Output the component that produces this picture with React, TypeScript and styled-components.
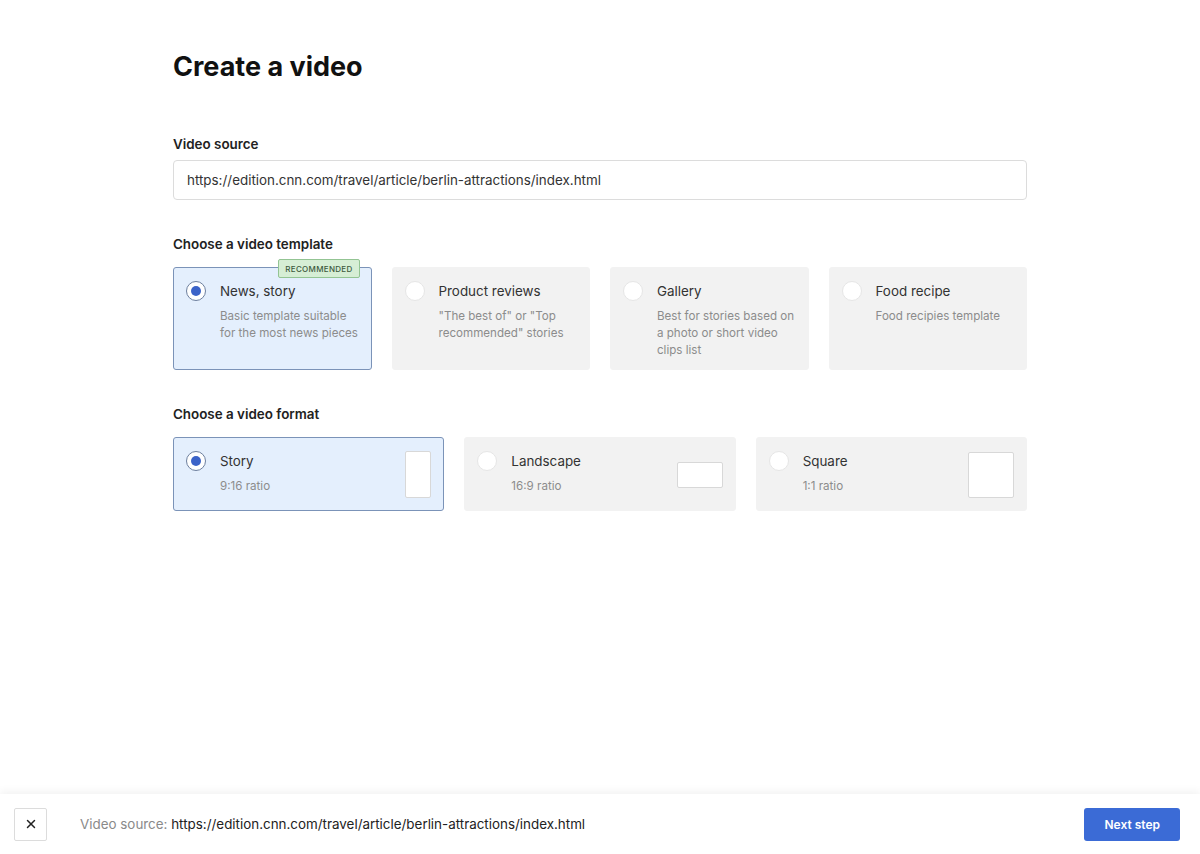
import styled, { createGlobalStyle } from 'styled-components'
import { X } from 'lucide-react'

const GlobalStyle = createGlobalStyle`
  html, body {
    margin: 0;
    padding: 0;
    background: #fff;
  }
  body {
    font-family: Inter, "Noto Sans", sans-serif;
    color: #222;
  }
  * { box-sizing: border-box; }
`

const Page = styled.div`
  min-height: 100vh;
  display: flex;
  flex-direction: column;
`

const Main = styled.main`
  flex: 1;
  width: 854px;
  margin: 0 auto;
  padding-top: 48px;
`

const Title = styled.h1`
  margin: 0 0 48px;
  font-size: 27px;
  line-height: 38px;
  font-weight: 700;
  color: #111;
`

const Label = styled.div`
  font-size: 13.4px;
  line-height: 20px;
  font-weight: 600;
  color: #222;
  margin-bottom: 6px;
`

const Section = styled.section`
  margin-bottom: 34px;
`

const Input = styled.div`
  height: 40px;
  border: 1px solid #dcdcdc;
  border-radius: 4px;
  display: flex;
  align-items: center;
  padding: 0 13px;
  font-size: 13.4px;
  color: #333;
`

const Grid = styled.div<{ $cols: number }>`
  display: grid;
  grid-template-columns: repeat(${p => p.$cols}, 1fr);
  gap: 20px;
  margin-top: 13px;
`

const Card = styled.div<{ $selected?: boolean }>`
  position: relative;
  display: flex;
  align-items: flex-start;
  gap: 14px;
  padding: 13px 8px 12px 12px;
  border-radius: 3px;
  border: 1px solid ${p => (p.$selected ? '#7b93b8' : '#f2f2f2')};
  background: ${p => (p.$selected ? '#e4effd' : '#f2f2f2')};
`

const TemplateCard = styled(Card)`
  height: 103px;
`

const FormatCard = styled(Card)`
  height: 74px;
  padding-right: 13px;
`

const Radio = styled.span<{ $checked?: boolean }>`
  flex: none;
  width: 20px;
  height: 20px;
  border-radius: 50%;
  background: #fff;
  border: 1px solid ${p => (p.$checked ? '#6d7f9e' : '#e6e6e6')};
  display: flex;
  align-items: center;
  justify-content: center;

  &::after {
    content: '';
    display: ${p => (p.$checked ? 'block' : 'none')};
    width: 10px;
    height: 10px;
    border-radius: 50%;
    background: #3b63c8;
  }
`

const CardBody = styled.div`
  flex: 1;
`

const CardTitle = styled.div`
  font-size: 13.4px;
  line-height: 20px;
  color: #333;
  margin-bottom: 7px;
`

const CardDesc = styled.div`
  font-size: 11.6px;
  line-height: 17px;
  color: #8c8c8c;
`

const Badge = styled.span`
  position: absolute;
  top: -9px;
  right: 11px;
  height: 19px;
  padding: 0 6px;
  display: flex;
  align-items: center;
  font-size: 8px;
  font-weight: 500;
  letter-spacing: 0.3px;
  color: #3d5a3d;
  background: #d6eed5;
  border: 1px solid #93c493;
  border-radius: 2px;
`

const Preview = styled.span<{ $w: number; $h: number }>`
  flex: none;
  align-self: center;
  width: ${p => p.$w}px;
  height: ${p => p.$h}px;
  margin-right: -1px;
  background: #fff;
  border: 1px solid #d8d8d8;
  border-radius: 2px;
`

const Footer = styled.footer`
  height: 60px;
  display: flex;
  align-items: center;
  padding: 0 20px 0 14px;
  background: #fff;
  box-shadow: 0 -3px 8px rgba(0, 0, 0, 0.05);
`

const CloseButton = styled.button`
  width: 33px;
  height: 33px;
  display: flex;
  align-items: center;
  justify-content: center;
  padding: 0;
  background: #fff;
  border: 1px solid #dcdcdc;
  border-radius: 2px;
  color: #222;
`

const SourceText = styled.div`
  flex: 1;
  margin-left: 33px;
  font-size: 13.4px;
  color: #222;

  span {
    color: #8a8a8a;
  }
`

const NextButton = styled.button`
  height: 33px;
  padding: 0 20px;
  border: none;
  border-radius: 3px;
  background: #3b6bd6;
  color: #fff;
  font-family: inherit;
  font-size: 12px;
  font-weight: 600;
`

const templates = [
  { title: 'News, story', desc: 'Basic template suitable for the most news pieces', selected: true, badge: true },
  { title: 'Product reviews', desc: '"The best of" or "Top recommended" stories' },
  { title: 'Gallery', desc: 'Best for stories based on a photo or short video clips list' },
  { title: 'Food recipe', desc: 'Food recipies template' },
]

const formats = [
  { title: 'Story', ratio: '9:16 ratio', w: 26, h: 47, selected: true },
  { title: 'Landscape', ratio: '16:9 ratio', w: 46, h: 26 },
  { title: 'Square', ratio: '1:1 ratio', w: 46, h: 46 },
]

const url = 'https://edition.cnn.com/travel/article/berlin-attractions/index.html'

export default function App() {
  return (
    <Page>
      <GlobalStyle />
      <Main>
        <Title>Create a video</Title>

        <Section>
          <Label>Video source</Label>
          <Input>{url}</Input>
        </Section>

        <Section>
          <Label>Choose a video template</Label>
          <Grid $cols={4}>
            {templates.map(t => (
              <TemplateCard key={t.title} $selected={t.selected}>
                {t.badge && <Badge>RECOMMENDED</Badge>}
                <Radio $checked={t.selected} />
                <CardBody>
                  <CardTitle>{t.title}</CardTitle>
                  <CardDesc>{t.desc}</CardDesc>
                </CardBody>
              </TemplateCard>
            ))}
          </Grid>
        </Section>

        <Section>
          <Label>Choose a video format</Label>
          <Grid $cols={3}>
            {formats.map(f => (
              <FormatCard key={f.title} $selected={f.selected}>
                <Radio $checked={f.selected} />
                <CardBody>
                  <CardTitle>{f.title}</CardTitle>
                  <CardDesc>{f.ratio}</CardDesc>
                </CardBody>
                <Preview $w={f.w} $h={f.h} />
              </FormatCard>
            ))}
          </Grid>
        </Section>
      </Main>

      <Footer>
        <CloseButton aria-label="Close">
          <X size={14} strokeWidth={2.5} />
        </CloseButton>
        <SourceText>
          <span>Video source: </span>
          {url}
        </SourceText>
        <NextButton>Next step</NextButton>
      </Footer>
    </Page>
  )
}
